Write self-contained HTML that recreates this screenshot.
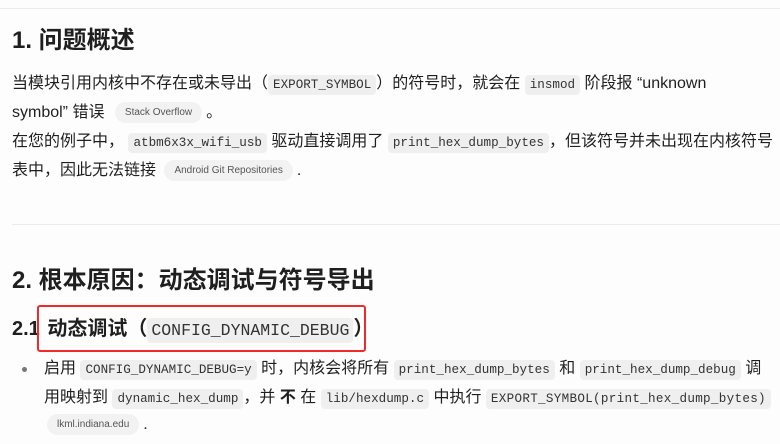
<!DOCTYPE html>
<html><head><meta charset="utf-8"><style>
body{margin:0;width:780px;height:444px;background:#fdfdfd;overflow:hidden;position:relative;font-family:"Liberation Sans","Noto Sans CJK SC",sans-serif;color:#1f1f1f}
.l{position:absolute;left:12px;white-space:nowrap;font-size:16px;line-height:22px}
code{font-family:"Liberation Mono","DejaVu Sans Mono",monospace;font-size:12.6px;background:#efefef;border-radius:4px;padding:3px 5px;color:#333}
.p{display:inline-block;font-size:10px;background:#f2f2f2;color:#555;border-radius:11px;padding:0 10px;height:21px;line-height:21px;vertical-align:middle;margin:0 4px}
h1,h3{margin:0;position:absolute;left:12px;white-space:nowrap}
</style></head><body>
<div style="position:absolute;left:0;top:8px;width:780px;height:1px;background:#ececec"></div>
<h1 style="top:25px;font-size:24px;line-height:32px;font-weight:bold">1. 问题概述</h1>
<div class="l" style="top:73px">当模块引用内核中不存在或未导出（<code>EXPORT_SYMBOL</code>）的符号时，就会在 <code>insmod</code> 阶段报 “unknown</div>
<div class="l" style="top:102px">symbol” 错误 <span class="p" style="margin-left:6px">Stack Overflow</span>。</div>
<div class="l" style="top:131px">在您的例子中， <code>atbm6x3x_wifi_usb</code> 驱动直接调用了 <code>print_hex_dump_bytes</code>，但该符号并未出现在内核符号</div>
<div class="l" style="top:160px">表中，因此无法链接 <span class="p">Android Git Repositories</span>.</div>
<div style="position:absolute;left:12px;top:224px;width:768px;height:1px;background:#ececec"></div>
<h1 style="top:265px;font-size:24px;line-height:32px;font-weight:bold">2. 根本原因：动态调试与符号导出</h1>
<h3 style="top:316px;font-size:20px;line-height:26px;font-weight:bold">2.1 <span style="margin-left:2px">动态调试（</span><code style="font-size:16.5px;font-weight:normal;padding:3px 4px">CONFIG_DYNAMIC_DEBUG</code>）</h3>
<div style="position:absolute;left:37px;top:305px;width:325px;height:43px;border:2px solid #f02a2a;border-radius:3px"></div>
<div style="position:absolute;left:22px;top:367px;width:5px;height:5px;border-radius:50%;background:#777"></div>
<div class="l" style="left:44px;top:358px">启用 <code>CONFIG_DYNAMIC_DEBUG=y</code> 时，内核会将所有 <code>print_hex_dump_bytes</code> 和 <code>print_hex_dump_debug</code> 调</div>
<div class="l" style="left:44px;top:387px">用映射到 <code>dynamic_hex_dump</code>，并 <b>不</b> 在 <code>lib/hexdump.c</code> 中执行 <code style="letter-spacing:0.3px">EXPORT_SYMBOL(print_hex_dump_bytes)</code></div>
<div class="l" style="left:44px;top:414px"><span class="p" style="margin-left:3px">lkml.indiana.edu</span>.</div>
</body></html>
